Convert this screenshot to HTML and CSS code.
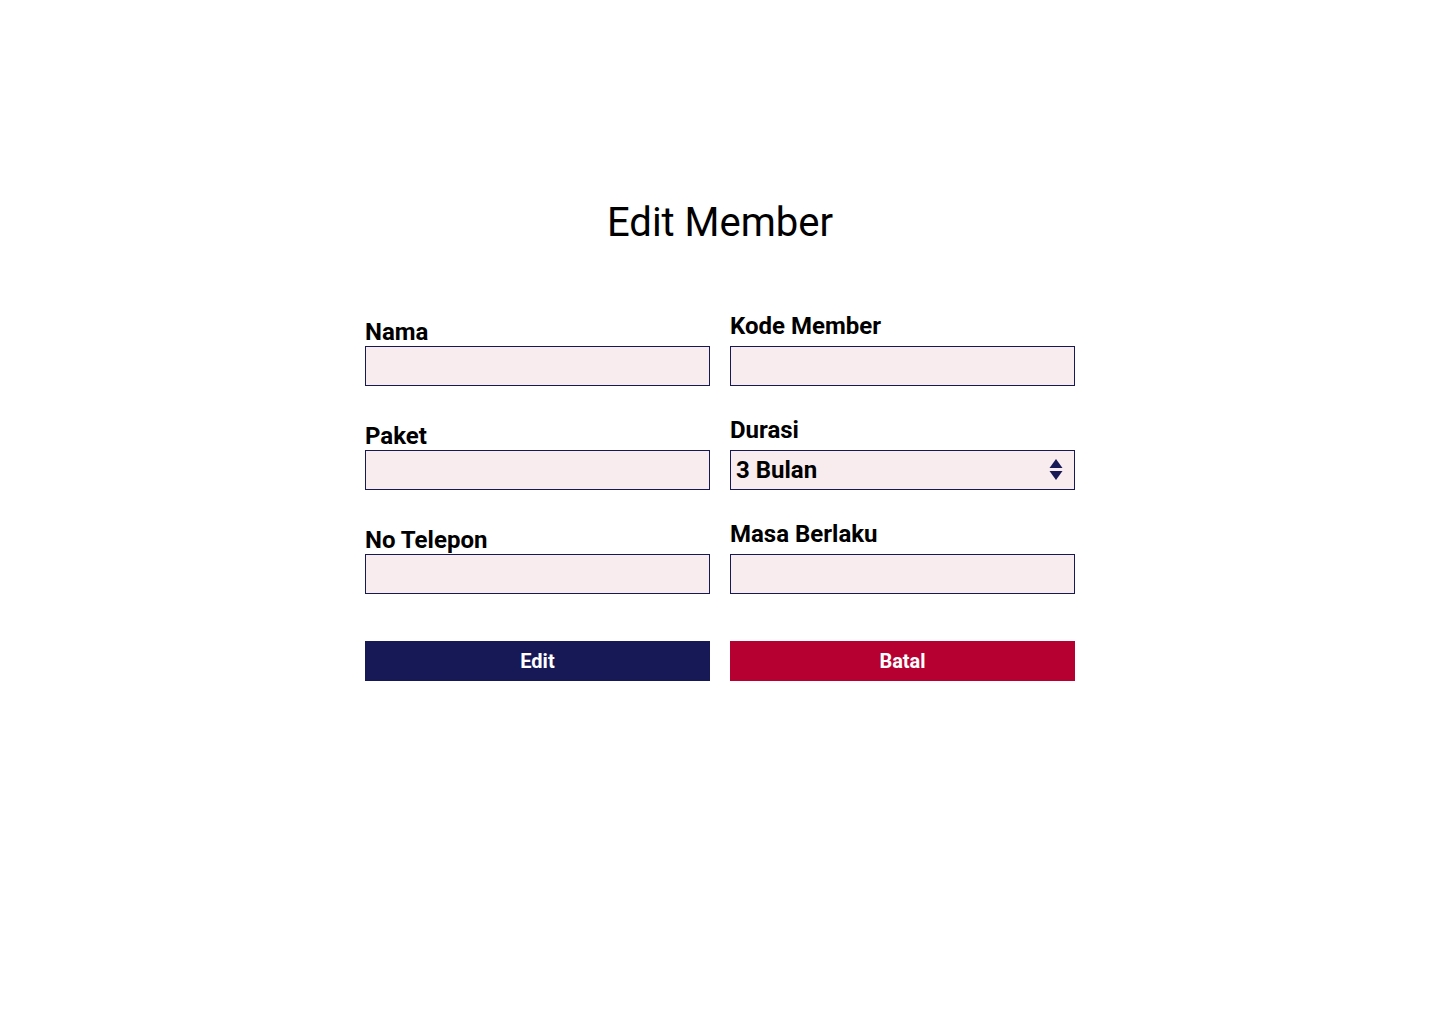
FILE: index.html
```html
<!DOCTYPE html>
<html lang="id">
<head>
<meta charset="utf-8">
<title>Edit Member</title>
<link rel="stylesheet" href="styles.css">
</head>
<body>
<main class="page">
  <h1 class="title">Edit Member</h1>
  <form class="form">
    <div class="field left">
      <label class="label">Nama</label>
      <div class="input"></div>
    </div>
    <div class="field right">
      <label class="label">Kode Member</label>
      <div class="input"></div>
    </div>
    <div class="field left">
      <label class="label">Paket</label>
      <div class="input"></div>
    </div>
    <div class="field right">
      <label class="label">Durasi</label>
      <div class="input select">
        <span class="select-text">3 Bulan</span>
        <svg class="select-arrows" width="14" height="24" viewBox="0 0 14 24">
          <path d="M7 1 L13.5 10 L0.5 10 Z" fill="#171957"/>
          <path d="M0.5 13 L13.5 13 L7 22 Z" fill="#171957"/>
        </svg>
      </div>
    </div>
    <div class="field left">
      <label class="label">No Telepon</label>
      <div class="input"></div>
    </div>
    <div class="field right">
      <label class="label">Masa Berlaku</label>
      <div class="input"></div>
    </div>
    <div class="actions">
      <button type="button" class="btn btn-edit">Edit</button>
      <button type="button" class="btn btn-cancel">Batal</button>
    </div>
  </form>
</main>
</body>
</html>
```

FILE: styles.css
```css
html, body {
  margin: 0;
  padding: 0;
  background: #ffffff;
}

body {
  font-family: Roboto, "Liberation Sans", Arial, sans-serif;
  color: #000000;
}

.page {
  width: 710px;
  margin: 0 auto;
  padding-top: 199px;
}

.title {
  margin: 0;
  font-size: 40px;
  font-weight: 400;
  line-height: 47px;
  text-align: center;
}

.form {
  margin-top: 66px;
  display: grid;
  grid-template-columns: 345px 345px;
  column-gap: 20px;
  row-gap: 30px;
  align-items: end;
}

.field {
  display: flex;
  flex-direction: column;
}

.label {
  font-size: 24px;
  font-weight: 700;
  line-height: 28px;
}

.field.left .label {
  margin-bottom: 0;
}

.field.right .label {
  margin-bottom: 6px;
}

.input {
  box-sizing: border-box;
  height: 40px;
  border: 1px solid #171957;
  background: #f8ecee;
}

.select {
  display: flex;
  align-items: center;
  justify-content: space-between;
  padding: 0 11px 0 5px;
  position: relative;
}

.select-text {
  font-size: 24px;
  font-weight: 700;
  line-height: 28px;
}

.select-arrows {
  display: block;
}

.actions {
  grid-column: 1 / span 2;
  display: grid;
  grid-template-columns: 345px 345px;
  column-gap: 20px;
  margin-top: 17px;
}

.btn {
  height: 40px;
  border: none;
  margin: 0;
  padding: 0;
  font-family: Roboto, "Liberation Sans", Arial, sans-serif;
  font-size: 20px;
  font-weight: 700;
  color: #ffffff;
  cursor: pointer;
}

.btn-edit {
  background: #171957;
}

.btn-cancel {
  background: #b60032;
}
```
